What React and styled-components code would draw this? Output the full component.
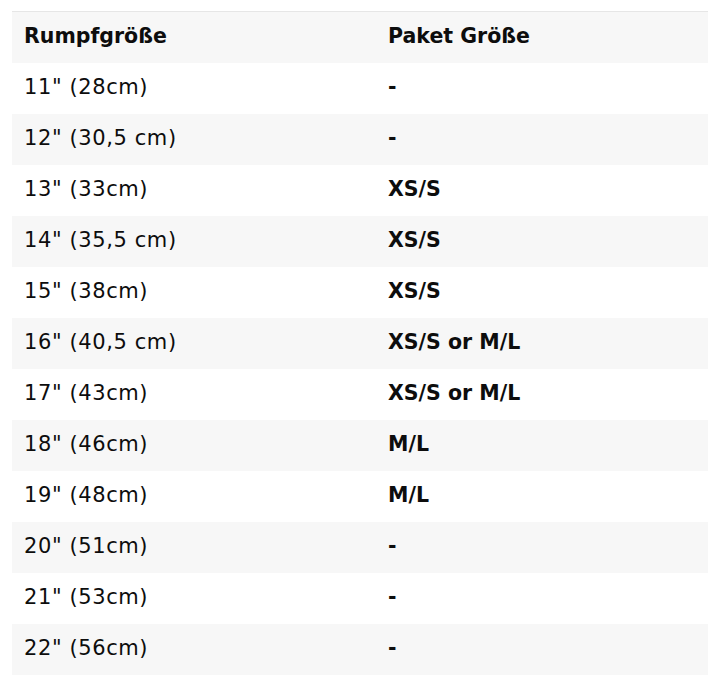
import React from 'react'
import styled, { createGlobalStyle } from 'styled-components'

const Global = createGlobalStyle`
  body {
    margin: 0;
    background: #fff;
    font-family: "DejaVu Sans", "Noto Sans", sans-serif;
  }
`

const Wrapper = styled.div`
  padding: 11px 12px 0 12px;
`

const Table = styled.table`
  width: 696px;
  table-layout: fixed;
  border-collapse: collapse;
  border-top: 1px solid #e6e6e6;
  color: #0d0d0d;
`

const Row = styled.tr`
  height: 51px;
  background: ${({ $shaded }) => ($shaded ? '#f7f7f7' : '#fff')};
`

const HeadCell = styled.th`
  box-sizing: border-box;
  text-align: left;
  font-weight: 700;
  font-size: 20.5px;
  padding: 0 12px 2px;
  width: ${({ $w }) => $w || 'auto'};
`

const Cell = styled.td`
  padding: 0 12px 2px;
  font-size: ${({ $bold }) => ($bold ? '20.5px' : '21px')};
  letter-spacing: ${({ $bold }) => ($bold ? '0' : '0.6px')};
  font-weight: ${({ $bold }) => ($bold ? 700 : 400)};
`

const rows = [
  ['11" (28cm)', '-'],
  ['12" (30,5 cm)', '-'],
  ['13" (33cm)', 'XS/S'],
  ['14" (35,5 cm)', 'XS/S'],
  ['15" (38cm)', 'XS/S'],
  ['16" (40,5 cm)', 'XS/S or M/L'],
  ['17" (43cm)', 'XS/S or M/L'],
  ['18" (46cm)', 'M/L'],
  ['19" (48cm)', 'M/L'],
  ['20" (51cm)', '-'],
  ['21" (53cm)', '-'],
  ['22" (56cm)', '-'],
]

export default function App() {
  return (
    <Wrapper>
      <Global />
      <Table>
        <thead>
          <Row $shaded>
            <HeadCell $w="364px">Rumpfgröße</HeadCell>
            <HeadCell>Paket Größe</HeadCell>
          </Row>
        </thead>
        <tbody>
          {rows.map(([a, b], i) => (
            <Row key={a} $shaded={i % 2 === 1}>
              <Cell>{a}</Cell>
              <Cell $bold>{b}</Cell>
            </Row>
          ))}
        </tbody>
      </Table>
    </Wrapper>
  )
}
